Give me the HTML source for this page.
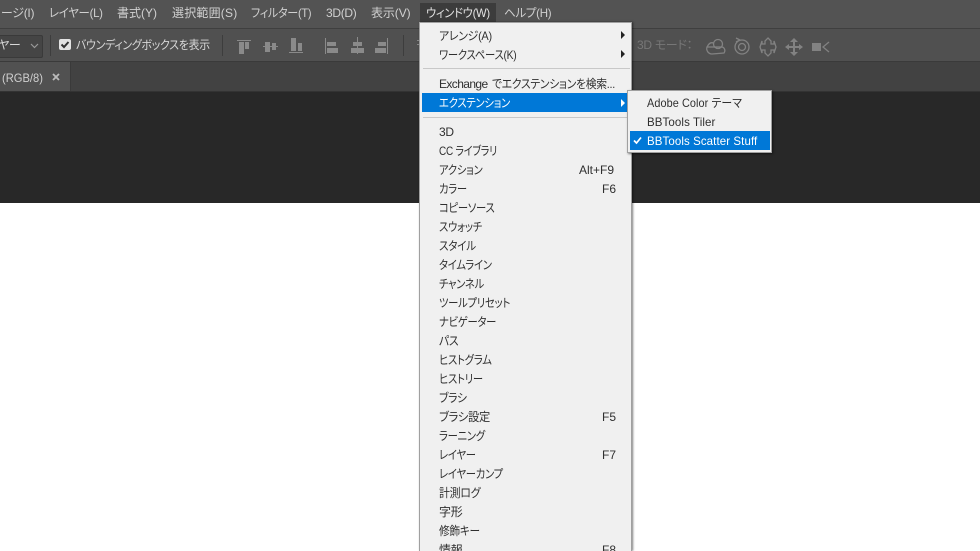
<!DOCTYPE html>
<html><head><meta charset="utf-8">
<style>
html,body{margin:0;padding:0;width:980px;height:551px;overflow:hidden;background:#fff}
body{position:relative;font-family:"Liberation Sans","Noto Sans CJK JP",sans-serif;font-size:12px}
div,span.a{position:absolute}
.t{position:absolute;white-space:nowrap;line-height:16px;height:16px;font-family:"Liberation Sans","Noto Sans CJK JP",sans-serif;font-size:12px;letter-spacing:-.3px;font-feature-settings:"palt";transform-origin:0 50%}
.b{color:#d0d0d0;top:5px}
.m{color:#2f2f2f;left:439px;transform:scaleX(.86)}
.k{color:#2f2f2f;left:602px}
.s{color:#2f2f2f;left:647px}
.tri{position:absolute;width:0;height:0;border-left:4px solid #222;border-top:4px solid transparent;border-bottom:4px solid transparent}
</style></head><body>
<div style="left:0;top:0;width:980px;height:28px;background:#535353"></div>
<div style="left:0;top:28px;width:980px;height:1px;background:#3f3f3f"></div>
<div style="left:0;top:29px;width:980px;height:32px;background:#505050"></div>
<div style="left:0;top:61px;width:980px;height:1px;background:#3a3a3a"></div>
<div style="left:0;top:62px;width:980px;height:29px;background:#424242"></div>
<div style="left:0;top:62px;width:70px;height:29px;background:#515151;border-right:1px solid #3a3a3a"></div>
<div style="left:0;top:91px;width:980px;height:1px;background:#333"></div>
<div style="left:0;top:92px;width:980px;height:111px;background:#282828"></div>

<span class="t b" style="left:1px">ージ(I)</span>
<span class="t b" style="left:49px;transform:scaleX(.95)">レイヤー(L)</span>
<span class="t b" style="left:117px;letter-spacing:0">書式(Y)</span>
<span class="t b" style="left:172px;letter-spacing:.2px">選択範囲(S)</span>
<span class="t b" style="left:251px;transform:scaleX(.92)">フィルター(T)</span>
<span class="t b" style="left:326px">3D(D)</span>
<span class="t b" style="left:371px;letter-spacing:-.1px">表示(V)</span>
<div style="left:420px;top:3px;width:76px;height:19px;background:#3c3c3c"></div>
<span class="t b" style="left:426px;color:#e4e4e4;transform:scaleX(.94)">ウィンドウ(W)</span>
<span class="t b" style="left:504px;transform:scaleX(.96)">ヘルプ(H)</span>

<div style="left:-4px;top:35px;width:45px;height:21px;background:#454545;border:1px solid #3a3a3a;border-radius:2px"></div>
<span class="t" style="left:-2px;top:37px;color:#d8d8d8">ヤー</span>
<svg style="position:absolute;left:30px;top:43px" width="9" height="6"><path d="M1 1L4.5 4.5L8 1" fill="none" stroke="#999" stroke-width="1.2"/></svg>
<div style="left:50px;top:35px;width:1px;height:21px;background:#3d3d3d"></div>
<div style="left:59px;top:39px;width:12px;height:11px;background:#e3e3e3;border-radius:2px"></div>
<svg style="position:absolute;left:59px;top:39px" width="12" height="11"><path d="M2.5 5.5L5 8L9.5 3" fill="none" stroke="#333" stroke-width="2"/></svg>
<span class="t" style="left:76px;top:37px;color:#d8d8d8;transform:scaleX(.91)">バウンディングボックスを表示</span>
<div style="left:222px;top:35px;width:1px;height:21px;background:#3d3d3d"></div>

<svg style="position:absolute;left:230px;top:32px" width="195" height="32" fill="#8a8a8a">
<rect x="7" y="8" width="14" height="1"/><rect x="9" y="10" width="5" height="12"/><rect x="15" y="10" width="4" height="7"/>
<rect x="33" y="14" width="15" height="1"/><rect x="35" y="10" width="5" height="10"/><rect x="42" y="11" width="4" height="7"/>
<rect x="59" y="20" width="14" height="1"/><rect x="61" y="6" width="5" height="13"/><rect x="68" y="11" width="4" height="8"/>
<rect x="95" y="6" width="1" height="16"/><rect x="97" y="10" width="9" height="4"/><rect x="97" y="16" width="11" height="5"/>
<rect x="127" y="5" width="1" height="17"/><rect x="123" y="10" width="9" height="4"/><rect x="121" y="16" width="13" height="5"/>
<rect x="157" y="6" width="1" height="16"/><rect x="148" y="10" width="8" height="4"/><rect x="145" y="16" width="11" height="5"/>
<rect x="173" y="3" width="1" height="21" fill="#3d3d3d"/>
<rect x="187" y="8" width="6" height="1"/><rect x="187" y="12" width="6" height="1"/>
</svg>

<span class="t" style="left:637px;top:37px;color:#777">3D モード：</span>
<svg style="position:absolute;left:705px;top:36px" width="130" height="22" fill="none" stroke="#828282" stroke-width="1.3">
<circle cx="13" cy="8" r="4.5"/><path d="M2 11C4 7 6 6 8.5 7M16.5 11C19 11 21 14 19 17L7 18C3 18 1 14 2 11Z"/>
<circle cx="37" cy="11" r="7"/><circle cx="37" cy="11" r="3.5"/><path d="M31 2L35 4L31 6"/>
<path d="M63 2L66 5V8H69V5L71 11L69 17V14H66V17L63 20L60 17V14H57V17L55 11L57 5V8H60V5Z"/>
<path d="M83 11H95M89 5V17" stroke-width="2"/><path d="M89 2L85 6H93ZM89 20L85 16H93ZM80 11L84 8V14ZM98 11L94 8V14Z" fill="#828282" stroke="none"/>
<rect x="107" y="7" width="9" height="8" fill="#828282" stroke="none"/><path d="M124 6L118 11L124 16"/>
</svg>

<span class="t" style="left:2px;top:70px;color:#cfcfcf;letter-spacing:0;transform:scaleX(.93)">(RGB/8)</span>
<svg style="position:absolute;left:52px;top:73px" width="8" height="8"><path d="M1 1L7 7M7 1L1 7" stroke="#bbb" stroke-width="1.8"/></svg>

<!-- Main menu -->
<div style="left:419px;top:22px;width:213px;height:529px;background:#f0f0f0;border:1px solid #a0a0a0;border-bottom:0;box-sizing:border-box;box-shadow:1px 0 2px rgba(0,0,0,.5)"></div>
<div style="left:423px;top:68px;width:207px;height:1px;background:#c8c8c8"></div>
<div style="left:423px;top:117px;width:207px;height:1px;background:#c8c8c8"></div>
<div style="left:422px;top:93px;width:209px;height:19px;background:#0078d7"></div>

<span class="t m" style="top:28px;transform:scaleX(.91)">アレンジ(A)</span>
<span class="t m" style="top:47px">ワークスペース(K)</span>
<span class="t m" style="top:76px;transform:none;letter-spacing:-.6px">Exchange</span>
<span class="t m" style="top:76px;left:492px;transform:scaleX(.9)">でエクステンションを検索...</span>
<span class="t m" style="top:95px;color:#fff">エクステンション</span>
<span class="t m" style="top:124px;transform:none">3D</span>
<span class="t m" style="top:143px;transform:scaleX(.83)">CC ライブラリ</span>
<span class="t m" style="top:162px">アクション</span><span class="t k" style="top:162px;left:579px;letter-spacing:0">Alt+F9</span>
<span class="t m" style="top:181px">カラー</span><span class="t k" style="top:181px;letter-spacing:0">F6</span>
<span class="t m" style="top:200px">コピーソース</span>
<span class="t m" style="top:219px">スウォッチ</span>
<span class="t m" style="top:238px;transform:scaleX(.88)">スタイル</span>
<span class="t m" style="top:257px">タイムライン</span>
<span class="t m" style="top:276px">チャンネル</span>
<span class="t m" style="top:295px">ツールプリセット</span>
<span class="t m" style="top:314px">ナビゲーター</span>
<span class="t m" style="top:333px;transform:scaleX(.9)">パス</span>
<span class="t m" style="top:352px">ヒストグラム</span>
<span class="t m" style="top:371px">ヒストリー</span>
<span class="t m" style="top:390px;transform:scaleX(.9)">ブラシ</span>
<span class="t m" style="top:409px;transform:scaleX(.94)">ブラシ設定</span><span class="t k" style="top:409px;letter-spacing:0">F5</span>
<span class="t m" style="top:428px">ラーニング</span>
<span class="t m" style="top:447px">レイヤー</span><span class="t k" style="top:447px;letter-spacing:0">F7</span>
<span class="t m" style="top:466px">レイヤーカンプ</span>
<span class="t m" style="top:485px;transform:scaleX(.91)">計測ログ</span>
<span class="t m" style="top:504px;transform:none">字形</span>
<span class="t m" style="top:523px;transform:scaleX(.89)">修飾キー</span>
<span class="t m" style="top:542px;transform:none">情報</span><span class="t k" style="top:542px;letter-spacing:0">F8</span>

<span class="tri" style="left:621px;top:31px"></span>
<span class="tri" style="left:621px;top:50px"></span>
<span class="tri" style="left:621px;top:99px;border-left-color:#fff"></span>

<!-- Submenu -->
<div style="left:627px;top:90px;width:145px;height:63px;background:#f0f0f0;border:1px solid #a0a0a0;box-sizing:border-box;box-shadow:1px 1px 2px rgba(0,0,0,.5)"></div>
<div style="left:630px;top:131px;width:140px;height:19px;background:#0078d7"></div>
<span class="t s" style="top:95px;letter-spacing:.1px;transform:scaleX(.905)">Adobe Color テーマ</span>
<span class="t s" style="top:114px;letter-spacing:.1px;transform:scaleX(.96)">BBTools Tiler</span>
<span class="t s" style="top:133px;color:#fff;letter-spacing:.1px;transform:scaleX(.957)">BBTools Scatter Stuff</span>
<svg style="position:absolute;left:633px;top:136px" width="9" height="9"><path d="M1 4.5L3.5 7L8 1.5" fill="none" stroke="#fff" stroke-width="1.7"/></svg>
</body></html>
